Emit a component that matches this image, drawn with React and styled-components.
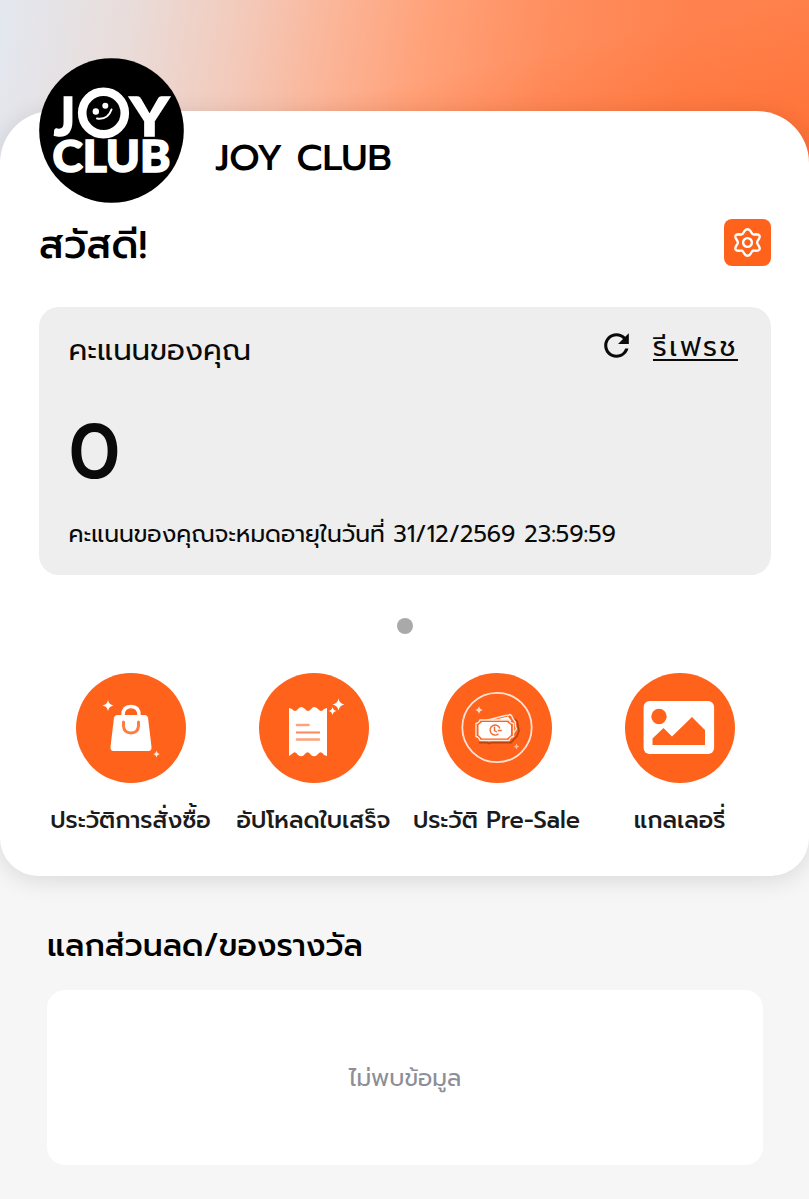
import styled, { createGlobalStyle } from 'styled-components';
import { MdRefresh } from 'react-icons/md';

const GlobalStyle = createGlobalStyle`
    * {
        box-sizing: border-box;
    }
    body {
        margin: 0;
        background: #f6f6f6;
        color: #0a0a0a;
        font-family: "Prompt", "Noto Sans Thai", "Noto Sans", "Open Sans", sans-serif;
    }
    h1, h2, p {
        margin: 0;
    }
`;

const Page = styled.div`
    display: flex;
    flex-direction: column;
    height: 1199px;
    padding-top: 111px;
    overflow: hidden;
    background:
        linear-gradient(168deg, rgba(255, 100, 30, 0) 45%, rgba(255, 90, 20, 0.5) 100%) 0 0 / 100% 200px no-repeat,
        linear-gradient(100deg, #e3e8f0 0%, #e9dcd9 16%, #f3cabb 29%, #fbb598 40%, #ffa27a 51%, #ff8e5e 66%, #ff824e 82%, #ff804b 100%) 0 0 / 100% 200px no-repeat,
        #f6f6f6;
`;

const Card = styled.main`
    height: 765px;
    padding: 0 38px 0 39px;
    border-radius: 52px 52px 38px 38px;
    background: #fff;
    box-shadow: 0 4px 25px rgba(0, 0, 0, 0.12);
`;

const Brand = styled.header`
    display: flex;
    align-items: flex-start;
    gap: 31px;
    height: 145px;
    margin-top: -53px;
`;

const Logo = styled.svg`
    width: 145px;
    height: 145px;
    flex: none;
    font-family: "Lato", sans-serif;
    font-weight: 900;
    fill: #fff;
    text {
        stroke: #fff;
        stroke-width: 1.6px;
    }
`;

const BrandName = styled.h1`
    margin-top: 75px;
    font-size: 37.1px;
    font-weight: 500;
    line-height: 50px;
    color: #000;
`;

const Greeting = styled.div`
    display: flex;
    justify-content: space-between;
    height: 47px;
    margin-top: 16px;
`;

const Hello = styled.h2`
    font-size: 39.1px;
    font-weight: 500;
    line-height: 52px;
    color: #000;
`;

const SettingButton = styled.button`
    width: 47px;
    height: 47px;
    padding: 0;
    border: 0;
    border-radius: 8px;
    background: #ff621b;
`;

const PointBox = styled.section`
    height: 268px;
    margin-top: 41px;
    padding: 20px 33px 0 29.5px;
    border-radius: 20px;
    background: #eee;
`;

const PointHead = styled.div`
    display: flex;
    justify-content: space-between;
    height: 48px;
    font-size: 29.3px;
    line-height: 47px;
`;

const Refresh = styled.div`
    display: flex;
    gap: 18px;
    font-size: 27.4px;
    line-height: 40px;
    svg {
        width: 37px;
        height: 37px;
    }
`;

const RefreshText = styled.span`
    height: 34px;
    border-bottom: 2px solid #0a0a0a;
    letter-spacing: 2.5px;
    white-space: nowrap;
`;

const Point = styled.div`
    height: 112px;
    font-size: 76px;
    font-weight: 500;
    line-height: 155px;
`;

const Expire = styled.p`
    margin-top: 27px;
    font-size: 23.46px;
    line-height: 40px;
`;

const Dot = styled.div`
    width: 16px;
    height: 16px;
    margin: 43px auto 0;
    border-radius: 50%;
    background: #a9a9a9;
`;

const Menu = styled.nav`
    display: grid;
    grid-template-columns: repeat(4, 183px);
    margin-top: 39px;
`;

const MenuItem = styled.div`
    display: flex;
    flex-direction: column;
    align-items: center;
    font-size: 23.46px;
    font-weight: 500;
    line-height: 34px;
    color: #1b1b1b;
`;

const Circle = styled.svg`
    width: 110px;
    height: 110px;
    margin-bottom: 20px;
    border-radius: 50%;
    background: #ff621b;
`;

const Reward = styled.section`
    padding: 47px 46px 0 47px;
`;

const RewardTitle = styled.h2`
    font-size: 31.3px;
    font-weight: 500;
    line-height: 46px;
    color: #000;
`;

const Empty = styled.div`
    display: flex;
    align-items: center;
    justify-content: center;
    height: 175px;
    margin-top: 21px;
    border-radius: 18px;
    background: #fff;
    color: #8c8f98;
    font-size: 23.46px;
`;

const star = (x, y, r) =>
    `M${x} ${y - r}Q${x + r * 0.15} ${y - r * 0.15} ${x + r} ${y}Q${x + r * 0.15} ${y + r * 0.15} ${x} ${y + r}Q${x - r * 0.15} ${y + r * 0.15} ${x - r} ${y}Q${x - r * 0.15} ${y - r * 0.15} ${x} ${y - r}Z`;

const JoyLogo = () => (
    <Logo viewBox="0 0 145 145">
        <circle cx="72.5" cy="72.5" r="72.3" fill="#000" />
        <text x="15" y="78" fontSize="54" textLength="21" lengthAdjust="spacingAndGlyphs">J</text>
        <text x="91" y="78" fontSize="54" textLength="39" lengthAdjust="spacingAndGlyphs">Y</text>
        <circle cx="64.5" cy="55" r="21.3" fill="none" stroke="#fff" strokeWidth="8.6" />
        <circle cx="56.8" cy="53.5" r="3.2" />
        <circle cx="66.3" cy="47.8" r="3" />
        <path d="M58 60.5Q69 62 72.5 51.5" fill="none" stroke="#fff" strokeWidth="2" strokeLinecap="round" />
        <text x="13.5" y="114.3" fontSize="43" textLength="118" lengthAdjust="spacingAndGlyphs">CLUB</text>
    </Logo>
);

const Gear = () => (
    <svg width="47" height="47" viewBox="-23.5 -23.5 47 47" fill="none" stroke="#fff" strokeWidth="2.4" strokeLinejoin="round">
        <path d="M-3 -11.5Q0 -15 3 -11.5L4.5 -9Q5.5 -7.8 6.8 -8L9 -8.2Q13.4 -8 11.7 -4.2L10.1 -1.5Q9.2 0 10.1 1.5L11.7 4.2Q13.4 8 9 8.2L6.8 8Q5.5 7.8 4.5 9L3 11.5Q0 15 -3 11.5L-4.5 9Q-5.5 7.8 -6.8 8L-9 8.2Q-13.4 8 -11.7 4.2L-10.1 1.5Q-9.2 0 -10.1 -1.5L-11.7 -4.2Q-13.4 -8 -9 -8.2L-6.8 -8Q-5.5 -7.8 -4.5 -9Z" />
        <circle r="4.4" />
    </svg>
);

const BagIcon = () => (
    <Circle viewBox="0 0 110 110">
        <path d="M47 46V42Q47 33.5 55 33.5T63 42V46" fill="none" stroke="#fff" strokeWidth="3.5" />
        <path d="M41 42H69Q71.5 42 72 44.5L75.5 74Q75.8 78 72.5 78H37.5Q34.2 78 34.5 74L38 44.5Q38.5 42 41 42Z" fill="#fff" />
        <path d="M47.5 49V53Q48 60 55 60T62.5 53V49" fill="none" stroke="#ff7b40" strokeWidth="3" strokeLinecap="round" />
        <path d={star(32, 32.5, 5.5)} fill="#fff" />
        <path d={star(80.5, 81, 3.6)} fill="#ffe9df" />
    </Circle>
);

const ReceiptIcon = () => (
    <Circle viewBox="0 0 110 110">
        <path d="M30 35L33 36Q36 40 39 36T46 36Q49 40 52 36T59 36Q62 40 65 36L68 35V83L65 82Q62 77 59 81T52 82Q49 77 46 81T39 82Q36 77 33 81L30 83Z" fill="#fff" />
        <path d="M38 52H49.5M38 66.5H60" stroke="#ffa27a" strokeWidth="2.6" strokeLinecap="round" />
        <path d="M37 59.5H61" stroke="#f58a5d" strokeWidth="1.8" />
        <path d={star(79.5, 31.5, 6)} fill="#fff" />
        <path d={star(73.5, 38, 4)} fill="#fff" />
    </Circle>
);

const PresaleIcon = () => (
    <Circle viewBox="0 0 110 110">
        <circle cx="55" cy="54.5" r="34.7" fill="none" stroke="#ffe2d3" strokeWidth="1.8" />
        <path d="M37 69.5H45L47 70.500L50 69.5H69L75 63L77 58L75 48L72 46" fill="none" stroke="#b8450e" strokeWidth="1.8" />
        <path d="M46 47L64 42.2Q66 43 67.5 41.5Q70 42 70.5 45L73.500 49.5Q73 53 74.5 56L70 62Z" fill="#ff621b" stroke="#ffe7db" strokeWidth="1.4" />
        <path d="M54 46.500L66 43.500L69.5 48Z" fill="#fff" />
        <path d="M38 47H67Q68 50 71.5 50.5V63.5Q68 64 67 67.5H38Q37 64 34 63.5V50.5Q37 50 38 47Z" fill="#ff621b" stroke="#ffe7db" strokeWidth="1.4" />
        <path d="M40 49H65L69 52V62L65 65.5H40L36.5 62V52Z" fill="#fff" />
        <path d="M56.5 60.7A5 5 0 1 1 57.8 55.5M55.8 57.5H59.8M52.5 53.5V57.5L55 59" fill="none" stroke="#f06a34" strokeWidth="1.4" />
        <path d={star(37, 37, 4)} fill="#ffd9c8" />
        <path d={star(74.5, 73.5, 3)} fill="#ffb796" />
    </Circle>
);

const GalleryIcon = () => (
    <Circle viewBox="0 0 110 110">
        <rect x="18.6" y="28" width="70.5" height="53" rx="6" fill="#fff" />
        <circle cx="34" cy="43.5" r="7.7" fill="#ff621b" />
        <path d="M27.5 72V65.5L38.5 55L47 63.5L67 44L80 57V72Z" fill="#ff621b" />
    </Circle>
);

const menus = [
    { label: 'ประวัติการสั่งซื้อ', icon: BagIcon },
    { label: 'อัปโหลดใบเสร็จ', icon: ReceiptIcon },
    { label: 'ประวัติ Pre-Sale', icon: PresaleIcon },
    { label: 'แกลเลอรี่', icon: GalleryIcon },
];

const App = () => {
    return (
        <>
            <GlobalStyle />
            <Page>
                <Card>
                    <Brand>
                        <JoyLogo />
                        <BrandName>JOY CLUB</BrandName>
                    </Brand>

                    <Greeting>
                        <Hello>สวัสดี!</Hello>
                        <SettingButton><Gear /></SettingButton>
                    </Greeting>

                    <PointBox>
                        <PointHead>
                            <span>คะแนนของคุณ</span>
                            <Refresh>
                                <MdRefresh />
                                <RefreshText>รีเฟรช</RefreshText>
                            </Refresh>
                        </PointHead>
                        <Point>0</Point>
                        <Expire>คะแนนของคุณจะหมดอายุในวันที่ 31/12/2569 23:59:59</Expire>
                    </PointBox>

                    <Dot />

                    <Menu>
                        {menus.map(({ label, icon: Icon }) =>
                            <MenuItem key={label}>
                                <Icon />
                                <span>{label}</span>
                            </MenuItem>)}
                    </Menu>
                </Card>

                <Reward>
                    <RewardTitle>แลกส่วนลด/ของรางวัล</RewardTitle>
                    <Empty>ไม่พบข้อมูล</Empty>
                </Reward>
            </Page>
        </>
    );
}

export default App;
